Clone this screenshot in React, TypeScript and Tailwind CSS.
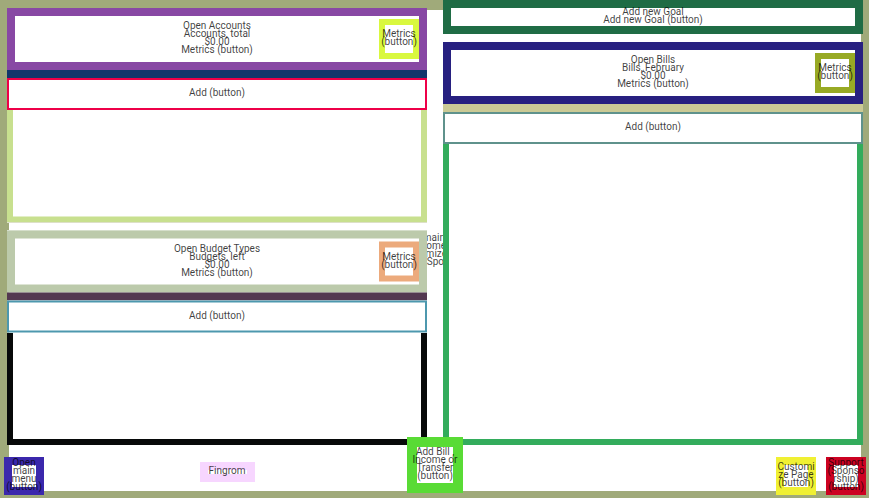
import type { ReactNode } from "react";

function Lines({ items, className = "" }: { items: string[]; className?: string }) {
  return (
    <div className={`flex flex-col items-center ${className}`}>
      {items.map((t) => (
        <span key={t} className="whitespace-nowrap">{t}</span>
      ))}
    </div>
  );
}

function Header({ items, frame, metrics }: { items: string[]; frame: string; metrics: string }) {
  return (
    <div className={`grid h-[62px] shrink-0 grid-cols-[40px_1fr_40px] border-8 bg-white ${frame}`}>
      <span />
      <Lines items={items} className="pt-[6px]" />
      <button className={`mt-[3px] flex h-10 w-10 flex-col items-center border-6 bg-white pt-[5px] ${metrics}`}>
        <span>Metrics</span>
        <span>(button)</span>
      </button>
    </div>
  );
}

function AddRow({ className }: { className: string }) {
  return (
    <button className={`flex h-8 w-full shrink-0 justify-center border-2 bg-white pt-[9px] ${className}`}>
      Add (button)
    </button>
  );
}

function Tile({ items, className }: { items: string[]; className: string }) {
  return (
    <button className={`flex shrink-0 flex-col items-center bg-white ${className}`}>
      <Lines items={items} />
    </button>
  );
}

function Layer({ children, className }: { children?: ReactNode; className: string }) {
  return <div className={`col-start-1 row-start-1 ${className}`}>{children}</div>;
}

export default function App() {
  return (
    <div className="grid h-[498px] w-[869px] grid-cols-[869px] grid-rows-[498px] overflow-hidden bg-white font-['Roboto',sans-serif] text-[10px] leading-[8px] text-black/75">
      <Layer className="border-t-10 border-r-8 border-b-7 border-l-9 border-[#a0aa7a]" />

      <Layer className="flex pl-[7px]">
        <section className="flex w-[420px] flex-col pt-2">
          <Header
            items={["Open Accounts", "Accounts, total", "$0.00", "Metrics (button)"]}
            frame="border-[#8848a4]"
            metrics="border-[#d9f83f]"
          />
          <div className="h-2 bg-[#12366b]" />
          <AddRow className="border-[#ee0048]" />
          <div className="h-[106px] border-x-6 border-[#c8e08f] bg-white" />
          <div className="h-px border-x-6 border-[#c8e08f] bg-[#e3efc7]" />
          <div className="h-[5px] bg-[#c8e08f]" />
          <div className="h-px bg-[#dde0c8]" />
          <div className="mt-[7px] h-[215px]">
            <div className="h-px bg-[#dde4d5]" />
            <div className="-mt-px translate-y-[0.5px]">
              <Header
                items={["Open Budget Types", "Budgets, left", "$0.00", "Metrics (button)"]}
                frame="border-[#bccaab]"
                metrics="border-[#ecaa7c]"
              />
              <div className="h-2 bg-[#533850]" />
              <AddRow className="border-[#4d98ae]" />
            </div>
            <div className="mt-px h-[112px] border-x-6 border-b-6 border-[#070909] bg-white" />
          </div>
        </section>

        <div className="flex w-4 flex-col items-end overflow-hidden pt-[234px]">
          <span className="-mr-[2px]">main</span>
          <span className="-mr-[3px]">Income</span>
          <span className="-mr-[4px]">Customize</span>
          <span className="-mr-px">Spo</span>
        </div>

        <section className="flex w-[420px] flex-col">
          <div className="h-[34px] border-8 border-[#1f6c45] bg-white">
            <Lines items={["Add new Goal", "Add new Goal (button)"]} />
          </div>
          <div className="mt-2">
            <Header
              items={["Open Bills", "Bills, February", "$0.00", "Metrics (button)"]}
              frame="border-[#272080]"
              metrics="border-[#98aa24]"
            />
          </div>
          <div className="h-2 bg-[#cbca95]" />
          <AddRow className="border-[#5f928c]" />
          <div className="h-[301px] border-x-6 border-b-6 border-[#33ac5c] bg-white" />
        </section>
      </Layer>

      <Layer className="flex items-start pt-[437px] pl-1">
        <Tile items={["Open", "main", "menu", "(button)"]} className="mt-5 h-[38px] w-10 border-8 border-[#3b28ac] *:-mt-[6px]" />
        <div className="mt-[25px] ml-[155.5px] flex h-5 w-[55px] translate-x-0 justify-center border-8 border-[#f7d6ff] bg-white">
          <span className="-mt-[3px]">Fingrom</span>
        </div>
        <Tile items={["Add Bill ,", "Income or", "Transfer", "(button)"]} className="ml-[152.5px] h-14 w-14 border-10 border-[#59db35] *:mt-px" />
        <Tile items={["Customi", "ze Page", "(button)"]} className="mt-5 ml-[313px] h-[38px] w-10 border-8 border-[#f0f033] *:-mt-[2px]" />
        <Tile items={["Support", "(Sponso", "rship)", "(button)"]} className="mt-5 ml-[10px] h-[38px] w-10 border-8 border-[#cc0222] *:-mt-[6px]" />
      </Layer>
    </div>
  );
}
